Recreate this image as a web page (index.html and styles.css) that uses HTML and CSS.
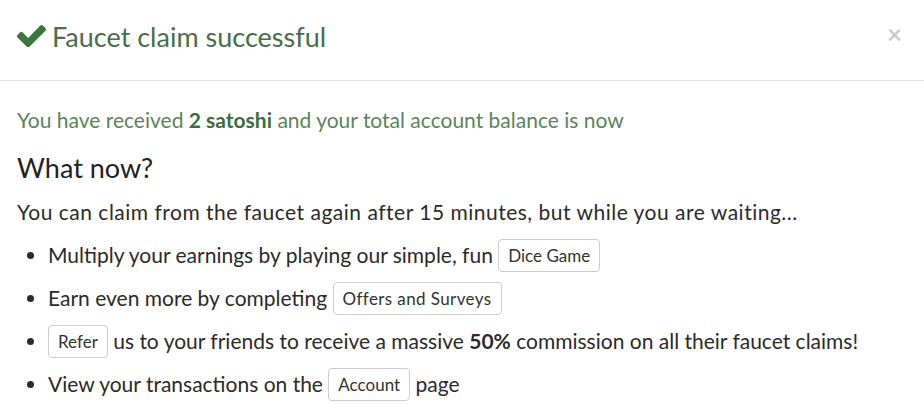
FILE: index.html
```html
<!DOCTYPE html>
<html>
<head>
<meta charset="utf-8">
<link rel="stylesheet" href="styles.css">
</head>
<body>
<div class="modal">
  <div class="modal-header">
    <h4 class="modal-title">
      <svg class="check" viewBox="121 290 1550 1204" width="29" height="23"><path fill="#3c763d" d="M1671 566q0 40-28 68l-724 724-136 136q-28 28-68 28t-68-28l-136-136-362-362q-28-28-28-68t28-68l136-136q28-28 68-28t68 28l294 295 656-657q28-28 68-28t68 28l136 136q28 28 28 68z"/></svg>
      <span>Faucet claim successful</span>
    </h4>
    <span class="close">×</span>
  </div>
  <div class="modal-body">
    <p class="success">You have received <b>2 satoshi</b> and your total account balance is now</p>
    <h3 class="what">What now?</h3>
    <p class="info">You can claim from the faucet again after 15 minutes, but while you are waiting...</p>
    <ul class="list">
      <li>Multiply your earnings by playing our simple, fun <span class="btn">Dice Game</span></li>
      <li>Earn even more by completing <span class="btn wide">Offers and Surveys</span></li>
      <li><span class="btn">Refer</span> us to your friends to receive a massive <b>50%</b> commission on all their faucet claims!</li>
      <li>View your transactions on the <span class="btn">Account</span> page</li>
    </ul>
  </div>
</div>
</body>
</html>
```
FILE: styles.css
```css
html, body {
  margin: 0;
  padding: 0;
  background: #fff;
}
body {
  font-family: Lato, "Liberation Sans", sans-serif;
  color: #2b2b2b;
}
.modal-header {
  height: 80px;
  border-bottom: 1px solid #e5e5e5;
  display: flex;
  align-items: center;
  justify-content: space-between;
  padding: 0 22px 0 17px;
}
.modal-title {
  margin: -8px 0 0;
  display: flex;
  align-items: center;
  gap: 6px;
  font-weight: 400;
  font-size: 27px;
  color: #4a6e4c;
}
.check {
  display: block;
  margin-top: -2px;
}
.close {
  font-size: 26px;
  font-weight: 700;
  color: #cbcbcb;
  margin-top: -12px;
}
.modal-body {
  padding: 0 17px;
}
.success {
  margin: 25px 0 0;
  font-size: 21px;
  line-height: 28px;
  color: #5a855a;
}
.success b {
  color: #3c6e3d;
}
.what {
  margin: 18px 0 0;
  font-weight: 400;
  font-size: 27px;
  line-height: 32px;
  color: #222;
}
.info {
  margin: 14px 0 0;
  font-size: 21px;
  line-height: 28px;
  letter-spacing: 0.5px;
}
.list {
  margin: 7px 0 0;
  padding-left: 31px;
  font-size: 21px;
}
.list li {
  height: 43px;
  line-height: 43px;
}
.btn {
  display: inline-block;
  vertical-align: middle;
  font-size: 17px;
  line-height: 21px;
  padding: 5px 9px;
  border: 1px solid #ccc;
  border-radius: 4px;
  color: #333;
  margin-top: -4px;
}
.btn.wide {
  letter-spacing: 0.4px;
}
```
